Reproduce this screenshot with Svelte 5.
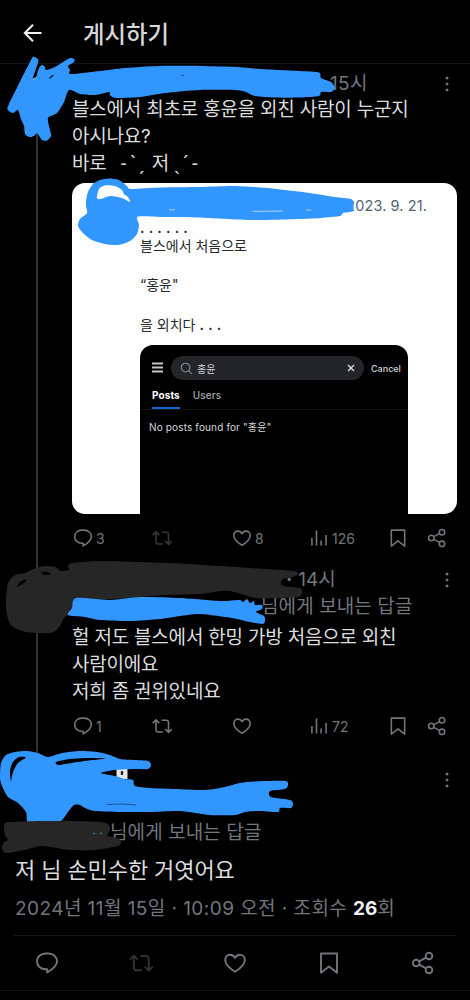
<script>
    const BLUE = '#3296ff'
    const DARK = '#262626'

    const posts = [
        {
            id: 0,
            time: '15시',
            lines: ['블스에서 최초로 홍윤을 외친 사람이 누군지', '아시나요?'],
            quote: true,
            replies: '3',
            likes: '8',
            views: '126',
            locked: true
        },
        {
            id: 1,
            time: '14시',
            replyTo: '님에게 보내는 답글',
            lines: ['헐 저도 블스에서 한밍 가방 처음으로 외친', '사람이에요', '저희 좀 권위있네요'],
            replies: '1',
            likes: '',
            views: '72',
            locked: false
        }
    ]

    // hand drawn marker strokes: outline first, then the gaps left inside it
    const marks = [
        {
            color: BLUE,
            shapes: [
                '31,60 34,57 38,59 38,63 33,78 36,77 39,68 42,65 45,67 46,70 55,67 69,58.5 74,59 74,62 68,66 70,70 71,74 100,71 125,68 160,66 200,66 237,67 260,69 300,71 319,72.5 321,78 331,82 335,88 331,92 321,92 319,96 300,97.5 275,97.5 255,96 240,90.5 200,90 165,93 140,97 116,98 110,95 109,92 95,95 80,94 69,90 64,102 57,113 48,118 50,130 51,136 47,140.5 42,140 37,133 34,136 29,137 25,134 24,126 21,119 18,110 13,113 8,110 9,104',
                '49,79 51,76 54,75 52,77'
            ]
        },
        {
            color: BLUE,
            shapes: [
                '86,201 88,192 93,184 100,180 109,178.5 119,180 127,186 131,189 160,187.5 200,187 232,186 262,187.5 285,190 310,193 335,197 351,199 353,203 353,211 343,213 340,216 321,218 300,219 262,220 235,219.5 200,217.5 165,217 138,216.5 139,225 137,234 130,241 118,245 105,244 92,240 83,233 78,226 80,219 87,213 86,206',
                '97,198 99,189 105,185.5 115,186 122,190 124,194 128,197 130,202 122,198 110,196 101,199'
            ]
        },
        {
            color: DARK,
            shapes: [
                '7,588 9,581 15,575 25,573 36,568 45,566 55,567 61,571 69,570 68,566 72,563 100,561 140,562 180,563.5 220,566 265,569 294,571 298,574 293,577 283,579 281,583 284,586 300,588 302,593 298,597 275,598 255,598 245,595 230,591 220,591 200,594 165,595 140,597 110,599 76,599 74,605 70,613 64,618 60,626 54,632 47,633 35,633 22,631 11,625 7,615 6,602',
                '17,587 20,582 26,579 24,583',
                '41,573 46,571.5 51,574 46,575'
            ]
        },
        {
            color: BLUE,
            shapes: ['76,598 110,600 140,597 180,598 220,601 239,600 243,602 247,599 250,603 254,601 255,605 262,605 262,609 256,612 264,616 265,621 262,624 245,621 232,618 200,614 180,616 160,619 130,621 100,620 85,617 68,615 72,608']
        },
        {
            color: BLUE,
            shapes: [
                '0,778 1,763 6,755 15,752 27,751 38,753 48,757 62,753 80,751 97,752 110,755 120,759 135,760 148,761 151,765 148,769 135,769 115,770 101,773 115,776 125,779 133,780 135,786 150,788 175,789 205,790 225,787 240,783 255,781.5 285,781 288,785 285,789 270,791 271,797 290,800 293,804 291,808 280,808 278,812 258,811 245,812 235,815 210,815 180,811 150,812 120,812 95,811 85,808 80,805 74,805 68,812 61,821 50,822 30,822 27,821 26,812 18,803 8,797 2,786',
                '11,781 10,771 13,762 19,757 26,757.5 18,763 13,772',
                '56,762 70,759 90,758 105,758.5 85,761 65,764 58,765'
            ]
        },
        {
            color: DARK,
            shapes: ['4,828 5,823 12,822 40,821 70,821 100,822 109,825 110,831 107,836 118,838 121,842 118,846 95,850 70,850 42,846 25,850 6,853 2,848 4,842 8,840 5,835']
        }
    ]

    function smooth(points) {
        const p = points.split(' ').map(s => s.split(',').map(Number))
        const n = p.length
        let d = `M${p[0]}`
        for (let i = 0; i < n; i++) {
            const [a, b, c, e] = [p[(i + n - 1) % n], p[i], p[(i + 1) % n], p[(i + 2) % n]]
            d += `C${b[0] + (c[0] - a[0]) / 8} ${b[1] + (c[1] - a[1]) / 8} ${c[0] - (e[0] - b[0]) / 8} ${c[1] - (e[1] - b[1]) / 8} ${c}`
        }
        return d + 'Z'
    }
</script>

{#snippet icon(name)}
    <svg class="icon" viewBox="0 0 24 24">
        {#if name === 'reply'}
            <path d="M10.500 2.500h3c4.800 0 8.500 3.500 8.500 7.900 0 4-3 7-9.800 11.100v-3.200h-1.700C5.700 18.300 2 14.800 2 10.400s3.700-7.900 8.500-7.900z" />
        {:else if name === 'repost'}
            <path d="M.8 8.600 4.800 4.600l4 4M4.800 5v11.500c0 1.700 1 2.700 2.700 2.700H13M23.800 15.600l-4 4-4-4M19.800 19V7.700c0-1.700-1-2.700-2.700-2.700H11.500" />
        {:else if name === 'like'}
            <path d="M12 20.800C6.400 17.200 2.200 13.300 2.200 8.900c0-3 2.200-5.200 4.900-5.200 2.100 0 3.800 1.100 4.900 3.200 1.100-2.100 2.800-3.200 4.900-3.200 2.700 0 4.900 2.200 4.900 5.200 0 4.400-4.200 8.300-9.800 11.900z" />
        {:else if name === 'views'}
            <path d="M3.500 21v-9M9 21V3M14.500 21v-6M20.500 21V8.500" />
        {:else if name === 'bookmark'}
            <path d="M4 2.500h16v19.200l-8-6.200-8 6.200z" />
        {:else if name === 'share'}
            <circle cx="5.200" cy="12" r="3.300" />
            <circle cx="18" cy="5" r="3.300" />
            <circle cx="18" cy="19" r="3.300" />
            <path d="m8.200 10.400 6.800-3.700M8.200 13.600l6.800 3.700" />
        {/if}
    </svg>
{/snippet}

{#snippet menu()}
    <svg class="menu" viewBox="0 0 4 16"><circle cx="2" cy="2" r="1.500" /><circle cx="2" cy="8" r="1.500" /><circle cx="2" cy="14" r="1.500" /></svg>
{/snippet}

<div class="screen">
    <header>
        <svg class="back" viewBox="0 0 20 20"><path d="M18.500 10H2M10 1.800 1.800 10l8.200 8.200" /></svg>
        <h1>게시하기</h1>
    </header>

    {#each posts as post (post.id)}
        <article class="post">
            <div class="gutter"><i></i></div>
            <div class="body">
                <div class="top">
                    <span class="time" class:second={post.id === 1}>{#if post.id === 1}<b>·</b>{/if}{post.time}</span>
                    {@render menu()}
                </div>
                {#if post.replyTo}
                    <div class="reply-to">{post.replyTo}</div>
                {/if}
                <div class="text">
                    {#each post.lines as line}
                        <p>{line}</p>
                    {/each}
                    {#if post.quote}
                        <p class="kaomoji"><span>바로</span><span class="rays">-ˋˏ</span><span>저</span><span class="rays">ˎˊ-</span></p>
                    {/if}
                </div>

                {#if post.quote}
                    <section class="quote">
                        <div class="date">2023. 9. 21.</div>
                        <div class="quote-text">
                            <p class="dots first">......</p>
                            <p>블스에서 처음으로</p>
                            <p class="gap">“홍윤"</p>
                            <p class="gap">을 외치다<span class="dots tail">...</span></p>
                        </div>
                        <div class="shot">
                            <div class="search">
                                <svg class="burger" viewBox="0 0 12 12"><path d="M0 1.500h11M0 5.500h11M0 9.500h11" /></svg>
                                <div class="field">
                                    <svg class="glass" viewBox="0 0 14 14"><circle cx="6" cy="6" r="4.700" /><path d="m9.500 9.500 3.500 3.500" /></svg>
                                    <span>홍윤</span>
                                    <svg class="clear" viewBox="0 0 8 8"><path d="m1 1 6 6M7 1 1 7" /></svg>
                                </div>
                                <span class="cancel">Cancel</span>
                            </div>
                            <div class="tabs">
                                <b>Posts</b>
                                <span>Users</span>
                            </div>
                            <p class="empty">No posts found for "홍윤"</p>
                        </div>
                    </section>
                {/if}

                <div class="actions">
                    <span>{@render icon('reply')}{post.replies}</span>
                    <span class:off={post.locked}>{@render icon('repost')}</span>
                    <span>{@render icon('like')}{post.likes}</span>
                    <span class="wide">{@render icon('views')}{post.views}</span>
                    <span>{@render icon('bookmark')}</span>
                    <span>{@render icon('share')}</span>
                </div>
            </div>
        </article>
    {/each}

    <article class="main-post">
        <div class="main-top">
            <svg class="lock" viewBox="0 0 12 12"><path class="plate" d="M0 1h12v11H0z" /><path d="M6 3.500v4" /></svg>
            {@render menu()}
        </div>
        <div class="reply-to">님에게 보내는 답글</div>
        <p class="main-text">저 님 손민수한 거엿어요</p>
        <p class="meta">2024년 11월 15일 · 10:09 오전 · 조회수 <b>26</b>회</p>
        <div class="main-actions">
            {@render icon('reply')}
            <span class="off">{@render icon('repost')}</span>
            {@render icon('like')}
            {@render icon('bookmark')}
            {@render icon('share')}
        </div>
    </article>

    <svg class="marks" viewBox="0 0 470 1000">
        {#each marks as mark}
            <path fill={mark.color} fill-rule="evenodd" d={mark.shapes.map(smooth).join('')} />
        {/each}
        <path class="scratch-white" d="M33 79.500 36 77.500M169 209.800h6M253 211.500l30-.5M306 210h5" />
        <path class="scratch-blue" d="M93 833.500h2M100 833.500h2" />
        <path class="scratch-ink" d="M107 804.500c10-.800 20-.500 29 .5M181 75.500h3" />
    </svg>
</div>

<style>
    :global(body) {
        background: #000;
    }

    .screen {
        position: relative;
        width: 470px;
        height: 1000px;
        overflow: hidden;
        background: #000;
        color: #dcddde;
        font-family: Inter, "Noto Sans CJK KR", sans-serif;
    }

    p, h1 {
        margin: 0;
        white-space: pre;
    }

    svg {
        display: block;
        flex: none;
        fill: none;
    }

    header {
        display: flex;
        align-items: center;
        box-sizing: border-box;
        height: 64px;
        padding: 3px 0 0 23px;
        border-bottom: 1px solid #151617;
    }

    .back {
        width: 20px;
        height: 20px;
        stroke: #f2f2f2;
        stroke-width: 2;
    }

    h1 {
        margin: 3px 0 0 40px;
        font-size: 23.4px;
        font-weight: 500;
        line-height: 30px;
        color: #d6d7d9;
    }

    .post {
        display: flex;
    }

    .gutter {
        display: flex;
        box-sizing: border-box;
        flex: none;
        width: 72px;
        padding-left: 36px;
    }

    .gutter i {
        width: 2px;
        background: #2f3133;
    }

    .post:nth-of-type(1) .gutter {
        padding-top: 60px;
    }

    .body {
        width: 385px;
    }

    .top {
        display: flex;
        align-items: center;
        justify-content: space-between;
        height: 23px;
        padding: 8px 8px 0 0;
        color: #71767b;
    }

    .time {
        margin-left: 258px;
        font-size: 19px;
        line-height: 23px;
        letter-spacing: 0.3px;
    }

    .time.second {
        margin-left: 214px;
        letter-spacing: 0;
    }

    .time b {
        margin-right: 6px;
    }

    .menu {
        width: 4px;
        height: 16px;
        fill: #6d7176;
    }

    .text {
        padding-top: 1px;
    }

    .text p {
        height: 27px;
        font-size: 19px;
        line-height: 27px;
        letter-spacing: -0.21px;
    }

    .text .kaomoji {
        display: flex;
    }

    .kaomoji span:nth-child(2) {
        margin: 0 4px 0 14px;
    }

    .kaomoji span:nth-child(4) {
        margin-left: 5px;
    }

    .rays {
        font-family: "Noto Sans", sans-serif;
        letter-spacing: 3.5px;
    }

    .reply-to {
        height: 27px;
        padding-left: 189px;
        font-size: 19px;
        line-height: 29px;
        letter-spacing: 0.1px;
        color: #71767b;
    }

    .quote {
        box-sizing: border-box;
        height: 331px;
        margin-top: 6px;
        padding: 13px 30px 0 68px;
        overflow: hidden;
        border-radius: 13px;
        background: #fff;
        color: #25282b;
    }

    .date {
        height: 20px;
        font-size: 14.5px;
        line-height: 20px;
        letter-spacing: 0.1px;
        text-align: right;
        color: #536471;
    }

    .quote-text {
        height: 129px;
        font-size: 14px;
    }

    .quote-text p {
        height: 19.6px;
        line-height: 19.6px;
    }

    .quote-text .gap {
        margin-top: 20px;
    }

    .quote-text .dots {
        font-weight: 600;
        letter-spacing: 4.2px;
    }

    .quote-text .first {
        line-height: 23px;
    }

    .dots.tail {
        margin-left: 4px;
    }

    .shot {
        width: 268px;
        height: 170px;
        border-radius: 13px 13px 0 0;
        background: #000;
        color: #d5d7da;
        font-size: 10px;
    }

    .search {
        display: flex;
        align-items: center;
        height: 46px;
        padding-left: 12px;
    }

    .burger {
        width: 12px;
        height: 12px;
        stroke: #c4c6c9;
        stroke-width: 1.8;
    }

    .field {
        display: flex;
        align-items: center;
        box-sizing: border-box;
        width: 193px;
        height: 24px;
        margin: 0 7px;
        padding: 0 9px 0 9px;
        border-radius: 12px;
        background: #232529;
    }

    .field span {
        flex: 1;
        margin-left: 4px;
    }

    .glass {
        width: 13px;
        height: 13px;
        stroke: #83878d;
        stroke-width: 1.2;
    }

    .clear {
        width: 8px;
        height: 8px;
        stroke: #d0d2d5;
        stroke-width: 1.5;
    }

    .cancel {
        font-weight: 500;
        font-size: 9px;
    }

    .tabs {
        display: flex;
        gap: 13px;
        height: 18px;
        padding-left: 12px;
        border-bottom: 1px solid #141517;
        line-height: 9px;
        letter-spacing: 0.1px;
    }

    .tabs b {
        height: 16px;
        border-bottom: 2px solid #1669d2;
        color: #fff;
    }

    .tabs span {
        font-weight: 500;
        color: #a5a8ad;
    }

    .empty {
        padding: 9px 0 0 9px;
        line-height: 16px;
        letter-spacing: 0.15px;
    }

    .actions {
        display: grid;
        grid-template-columns: 80px 80px 76px 80px 39px 30px;
        height: 24px;
        margin-top: 12px;
        font-size: 14px;
        color: #71767b;
    }

    .actions span {
        display: flex;
        align-items: center;
        gap: 3px;
    }

    .actions span:first-child {
        padding-left: 1px;
    }

    .actions .wide {
        margin-left: 1px;
    }

    .icon {
        width: 20px;
        height: 20px;
        stroke: currentColor;
        stroke-width: 1.9;
        stroke-linejoin: round;
    }

    .actions span:first-child .icon {
        width: 20px;
        height: 20px;
    }

    .actions .off,
    .main-actions .off {
        color: #34373a;
    }

    .post:nth-of-type(2) .top {
        padding-top: 17px;
        height: 25px;
    }

    .post:nth-of-type(2) .text {
        padding-top: 5px;
    }

    .post:nth-of-type(2) .actions {
        margin-top: 9px;
    }

    .post:nth-of-type(2) .gutter i {
        margin-bottom: -20px;
    }

    .main-top {
        display: flex;
        justify-content: space-between;
        box-sizing: border-box;
        height: 80px;
        padding: 30px 21px 0 116px;
    }

    .lock {
        width: 12px;
        height: 11px;
        stroke: #111;
        stroke-width: 2.5;
    }

    .lock .plate {
        fill: #e4e5e6;
        stroke: none;
    }

    .main-top .menu {
        margin-top: 4px;
    }

    .main-post .reply-to {
        padding-left: 110px;
    }

    .main-text {
        margin: 10px 0 0 15px;
        font-size: 22px;
        line-height: 30px;
        letter-spacing: -0.1px;
    }

    .meta {
        margin: 10px 0 0 15px;
        font-size: 19px;
        line-height: 27px;
        letter-spacing: 0.44px;
        color: #71767b;
    }

    .meta b {
        font-weight: 700;
        letter-spacing: 0;
        color: #f0f1f2;
    }

    .main-actions {
        display: flex;
        align-items: center;
        justify-content: space-between;
        height: 54px;
        margin: 13px 14px 0;
        padding: 0 21px;
        border-top: 1px solid #17181a;
    }

    .main-post {
        border-bottom: 1px solid #121314;
    }

    .main-actions .icon {
        width: 24px;
        height: 24px;
        color: #71767b;
    }

    .main-actions .off .icon {
        color: #303336;
    }

    .marks {
        position: absolute;
        inset: 0;
        width: 470px;
        height: 1000px;
    }

    .scratch-white {
        stroke: #cfe6ff;
        stroke-width: 0.8;
    }

    .scratch-blue {
        stroke: #2878a8;
        stroke-width: 1.5;
    }

    .scratch-ink {
        stroke: #174f8c;
        stroke-width: 0.9;
    }
</style>
